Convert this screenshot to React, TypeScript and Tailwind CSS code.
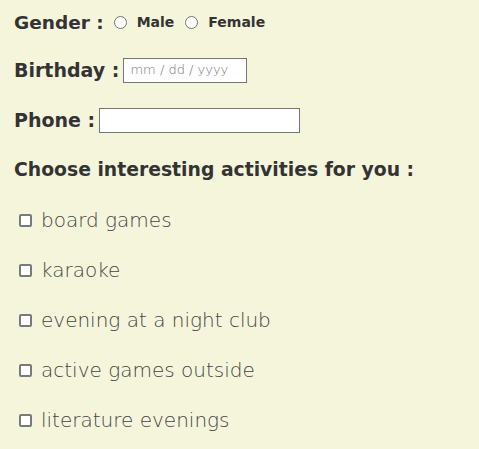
import React from 'react';

const activities = [
  'board games',
  'karaoke',
  'evening at a night club',
  'active games outside',
  'literature evenings',
];

export default function App() {
  return (
    <div className="min-h-screen w-full bg-[#f5f5dc] px-[14px] text-[#333] font-['DejaVu_Sans',sans-serif]">
      <div className="flex h-[45px] items-center gap-[6px]">
        <span className="text-[18.5px] font-bold">Gender :</span>
        <label className="flex items-center gap-[10px]">
          <span className="ml-[4px] h-[13px] w-[13px] rounded-full border border-[#767676] bg-white" />
          <span className="text-[14px] font-bold">Male</span>
        </label>
        <label className="ml-[5px] flex items-center gap-[10px]">
          <span className="h-[13px] w-[13px] rounded-full border border-[#767676] bg-white" />
          <span className="text-[14px] font-bold">Female</span>
        </label>
      </div>

      <div className="flex h-[50px] items-center gap-[4px]">
        <span className="text-[19px] font-bold">Birthday :</span>
        <div className="flex h-[25px] w-[124px] items-center border border-[#767676] bg-white px-[6px] text-[13px] font-extralight text-[#757575]">
          mm / dd / yyyy
        </div>
      </div>

      <div className="flex h-[50px] items-center gap-[4px]">
        <span className="text-[19px] font-bold">Phone :</span>
        <input className="h-[25px] w-[201px] border border-[#767676] bg-white outline-none" />
      </div>

      <div className="flex h-[50px] items-center">
        <span className="text-[18.8px] font-bold">Choose interesting activities for you :</span>
      </div>

      {activities.map((a) => (
        <div key={a} className="flex h-[50px] items-center gap-[9px] pl-[5px]">
          <span className="h-[13px] w-[13px] rounded-[2px] border-2 border-[#7a7a7a] bg-white" />
          <span className="text-[20px] font-extralight text-[#444]">{a}</span>
        </div>
      ))}
    </div>
  );
}
